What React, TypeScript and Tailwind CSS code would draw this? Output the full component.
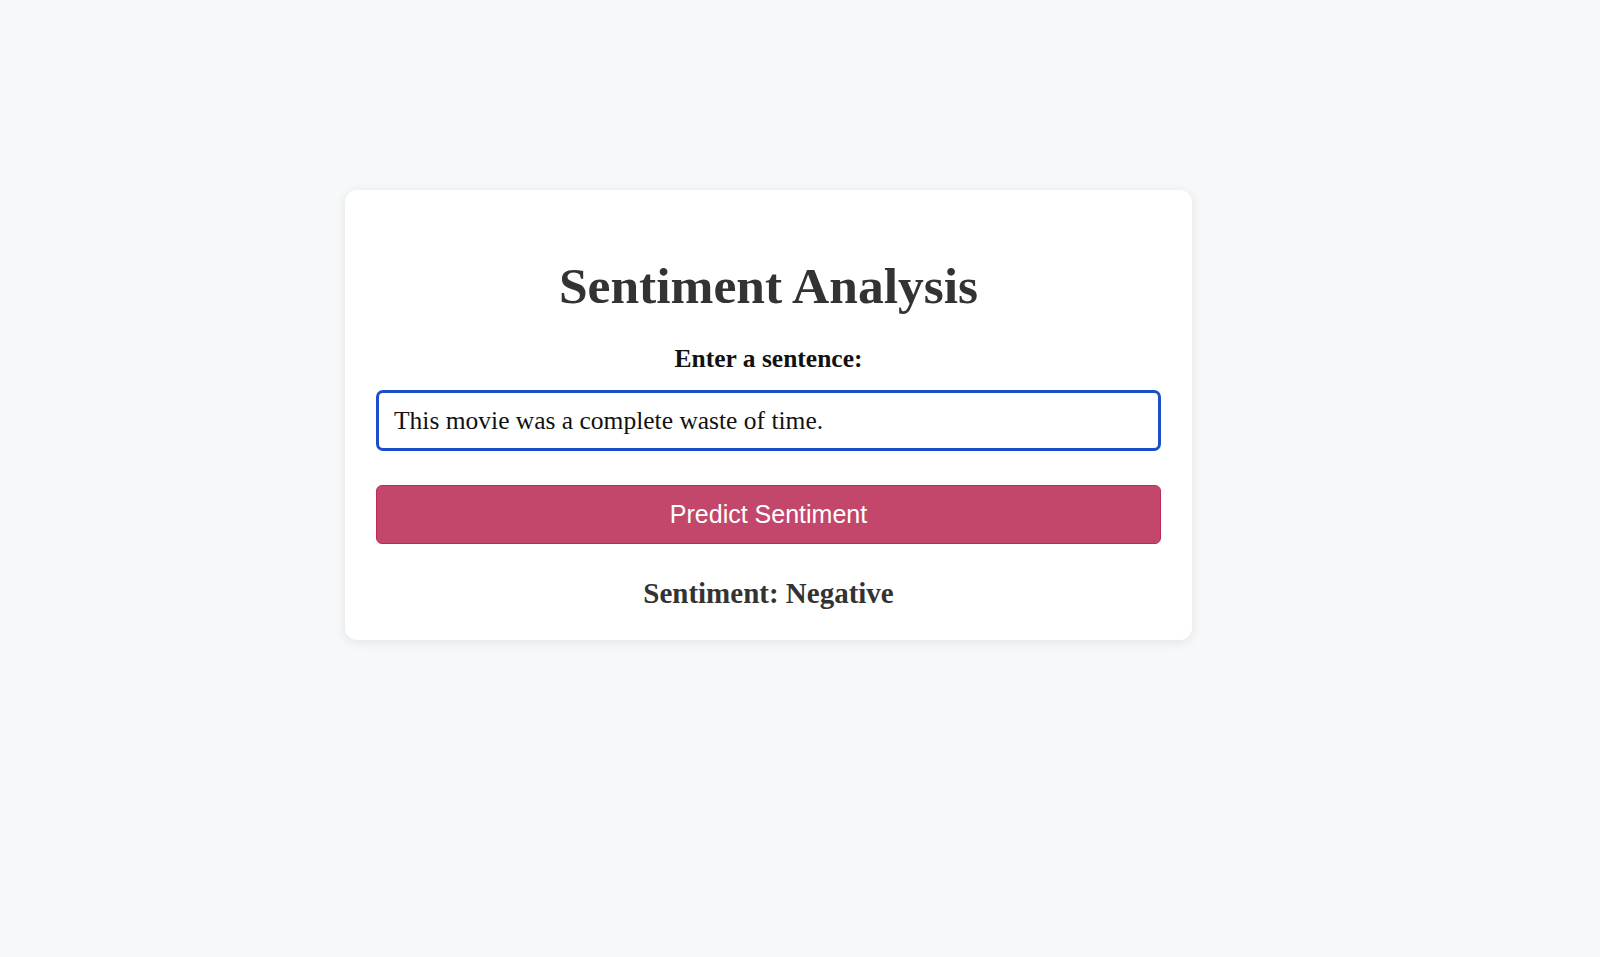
import React, { useState } from 'react';

export default function App() {
    const [text, setText] = useState('This movie was a complete waste of time.');

    return (
        <div className="min-h-screen bg-[#f7f8fa] pt-[190px]" style={{ fontFamily: '"Liberation Serif", serif' }}>
            <div className="ml-[345px] w-[847px] rounded-[12px] bg-white px-[31px] pt-[66px] pb-[29px] shadow-[0_2px_12px_rgba(0,0,0,0.09)]">
                <h1 className="text-center text-[51.5px] font-bold leading-[60px] text-[#333333]">
                    Sentiment Analysis
                </h1>
                <label htmlFor="sentence" className="mt-[28px] block text-center text-[25.5px] font-bold leading-[30px] text-[#111111]">
                    Enter a sentence:
                </label>
                <input
                    id="sentence"
                    type="text"
                    value={text}
                    onChange={(e) => setText(e.target.value)}
                    className="mt-[16px] block h-[61px] w-full rounded-[7px] border-[3px] border-[#1a4fc9] bg-white px-[15px] text-[25.5px] text-[#111111] outline-none"
                />
                <button
                    type="button"
                    className="mt-[34px] block h-[59px] w-full rounded-[6px] border border-[#c0285a] bg-[#c2476b] text-[25px] text-white"
                    style={{ fontFamily: '"Liberation Sans", Arial, sans-serif' }}
                >
                    Predict Sentiment
                </button>
                <p className="mt-[31px] text-center text-[29px] font-bold leading-[36px] text-[#333333]">
                    Sentiment: Negative
                </p>
            </div>
        </div>
    );
}
